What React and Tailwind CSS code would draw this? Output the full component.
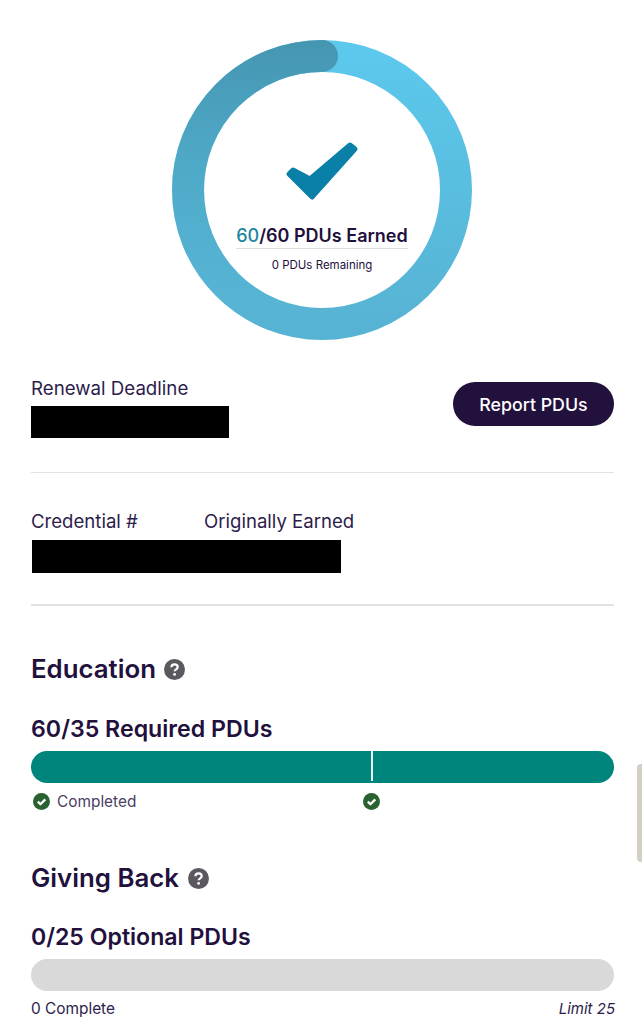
const font = { fontFamily: 'Inter, "Noto Sans", sans-serif' }

const HelpIcon = ({ className }) => (
    <svg width="21" height="21" viewBox="0 0 21 21" className={`shrink-0 ${className || ''}`}>
        <circle cx="10.5" cy="10.5" r="10.5" fill="#5c5860" />
        <path d="M7.4 8.2c0-1.8 1.4-2.9 3.2-2.9s3.1 1.1 3.1 2.7c0 2.2-3 2.3-3 4.2" fill="none" stroke="#fff" strokeWidth="2.2" />
        <circle cx="10.6" cy="15.4" r="1.4" fill="#fff" />
    </svg>
)

const CheckBadge = () => (
    <svg width="17" height="17" viewBox="0 0 17 17" className="shrink-0">
        <circle cx="8.5" cy="8.5" r="8.5" fill="#2a6130" />
        <path d="M4.8 8.7l2.6 2.5 4.9-4.8" fill="none" stroke="#fff" strokeWidth="2.3" strokeLinejoin="round" />
    </svg>
)

const Ring = () => (
    <div className="relative w-[300px] h-[300px]">
        <svg width="300" height="300" viewBox="0 0 300 300">
            <defs>
                <linearGradient id="ringBase" x1="0" y1="0" x2="0" y2="1">
                    <stop offset="0%" stopColor="#5bc8ec" />
                    <stop offset="100%" stopColor="#57b3d3" />
                </linearGradient>
                <linearGradient id="ringDone" gradientUnits="userSpaceOnUse" x1="0" y1="0" x2="0" y2="300">
                    <stop offset="0%" stopColor="#4595b0" />
                    <stop offset="90%" stopColor="#4595b0" stopOpacity="0" />
                </linearGradient>
            </defs>
            <circle cx="150" cy="150" r="134" fill="none" stroke="url(#ringBase)" strokeWidth="32" />
            <path d="M150 16A134 134 0 0 0 150 284" fill="none" stroke="url(#ringDone)" strokeWidth="32" strokeLinecap="round" />
            <polygon
                points="178,105 183,109 140,157 117,134 121,130 138,139"
                fill="#0a80a8"
                stroke="#0a80a8"
                strokeWidth="5"
                strokeLinejoin="round"
            />
        </svg>
        <div className="absolute left-0 right-0 top-[185px] flex flex-col items-center">
            <div className="w-[172px] pb-[1px] border-b border-[#dddde2] text-center text-[18px] leading-[22px] font-semibold text-[#22103d] whitespace-nowrap">
                <span className="text-[#1c87a0] font-medium">60</span>/60 PDUs Earned
            </div>
            <div className="mt-[9px] text-[11.5px] leading-[14px] text-[#22103d] whitespace-nowrap">0 PDUs Remaining</div>
        </div>
    </div>
)

const App = () => {
    return (
        <div style={font} className="relative w-[642px] h-[1024px] overflow-hidden bg-white text-[#22103d]">
            <div className="pt-10 pl-[172px]">
                <Ring />
            </div>

            <div className="ml-[31px] mr-[28px] mt-[37px] h-[96px] border-b border-[#e2e2e2] flex items-start justify-between">
                <div className="pt-[1px]">
                    <div className="text-[18.7px] leading-[22px] text-[#2d1d4c]">Renewal Deadline</div>
                    <div className="w-[198px] h-[32px] mt-[6px] bg-black"></div>
                </div>
                <button className="mt-[5px] pt-[2px] w-[161px] h-[44px] rounded-full bg-[#22103d] text-white text-[17.8px] font-medium">Report PDUs</button>
            </div>

            <div className="ml-[31px] mr-[28px] h-[133px] border-b-2 border-[#e2e2e2] pt-[37px]">
                <div className="flex text-[18.6px] leading-[22px] text-[#2d1d4c]">
                    <span className="w-[173px]">Credential #</span>
                    <span>Originally Earned</span>
                </div>
                <div className="w-[309px] h-[33px] ml-[1px] mt-[8px] bg-black"></div>
            </div>

            <div className="ml-[31px] mr-[28px]">
                <div className="mt-[48px] flex items-center gap-[8px] h-[30px]">
                    <h2 className="text-[25.8px] leading-[30px] font-semibold">Education</h2>
                    <HelpIcon />
                </div>
                <div className="mt-[32px] text-[23.2px] leading-[26px] font-semibold">60/35 Required PDUs</div>
                <div className="relative mt-[9px] h-[32px] rounded-full bg-[#00857c]">
                    <div className="absolute left-[340px] top-0 w-[2px] h-[30px] bg-[#e6f2f1]"></div>
                </div>
                <div className="relative mt-[10px] flex items-center gap-[7px] h-[17px] pl-[2px]">
                    <CheckBadge />
                    <span className="text-[15.4px] leading-[17px] text-[#4a3d66]">Completed</span>
                    <div className="absolute left-[332px] top-0">
                        <CheckBadge />
                    </div>
                </div>

                <div className="mt-[53px] flex items-center gap-[9px] h-[30px]">
                    <h2 className="text-[25.8px] leading-[30px] font-semibold">Giving Back</h2>
                    <HelpIcon />
                </div>
                <div className="mt-[31px] text-[23.1px] leading-[26px] font-semibold">0/25 Optional PDUs</div>
                <div className="mt-[9px] h-[32px] rounded-full bg-[#d9d9d9]"></div>
                <div className="mt-[9px] -mr-[1px] flex justify-between text-[15.4px] leading-[18px] text-[#2d1d4c]">
                    <span>0 Complete</span>
                    <span className="italic text-[15px]">Limit 25</span>
                </div>
            </div>

            <div className="absolute right-0 top-[764px] w-[5px] h-[98px] rounded-l-sm bg-[#d5cec4]"></div>
        </div>
    )
}

export default App
